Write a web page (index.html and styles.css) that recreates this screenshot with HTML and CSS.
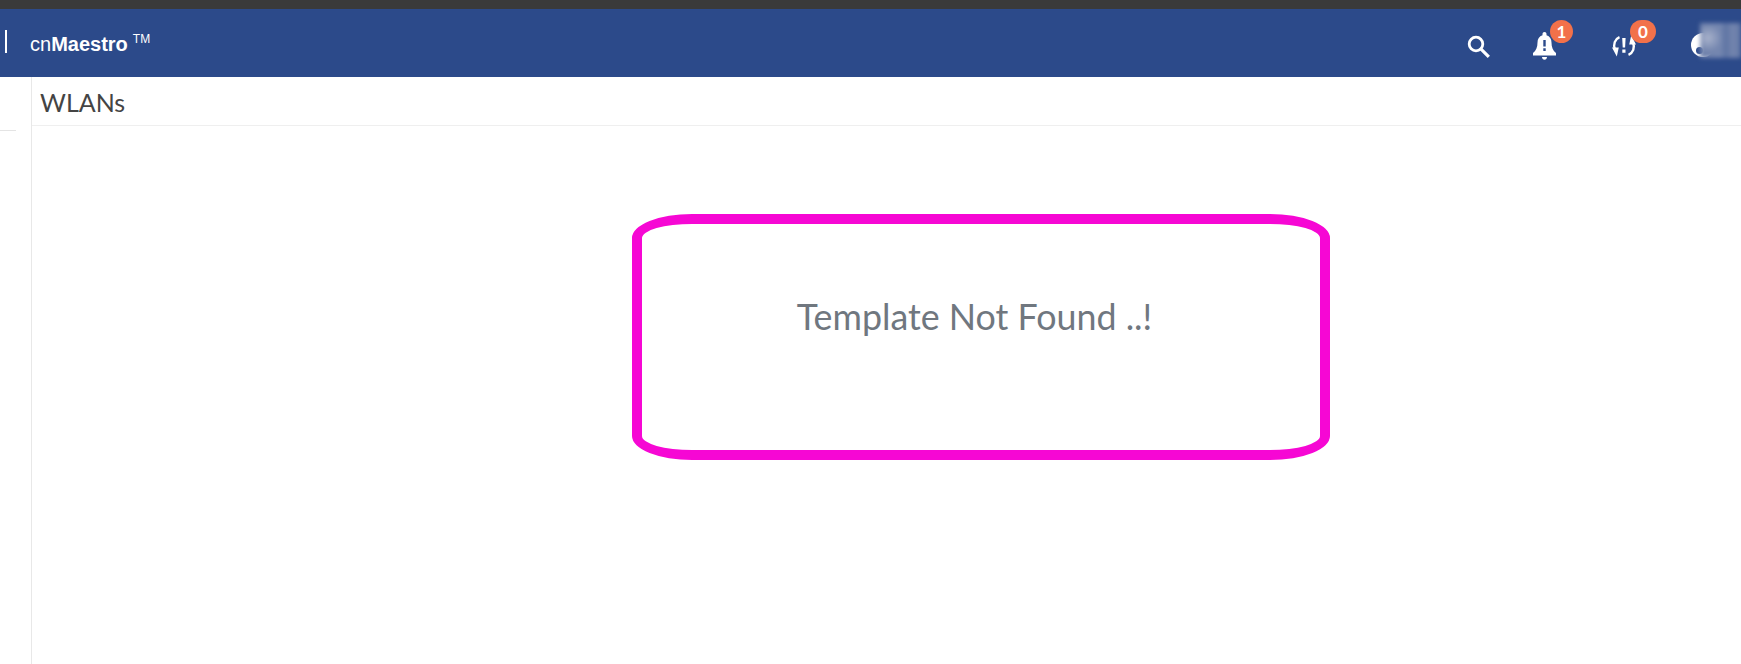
FILE: index.html
```html
<!DOCTYPE html>
<html lang="en">
<head>
  <meta charset="UTF-8">
  <title>WLANs</title>
  <link rel="stylesheet" href="styles.css">
</head>
<body>
  <div class="chrome"></div>
  <header class="topbar">
    <span class="divider"></span>
    <div class="brand">cn<b>Maestro</b><sup>TM</sup></div>
    <div class="actions">
      <svg class="icon-search" width="23" height="23" viewBox="0 0 23 23" fill="none" stroke="#fff">
        <circle cx="9" cy="9" r="6.800" stroke-width="2.800"/>
        <path d="M13.800 13.800l8 8" stroke-width="3.200"/>
      </svg>
      <div class="action action-bell">
        <svg width="23" height="28" viewBox="0 0 23 28" fill="#fff">
          <path d="M11.500 0c1.200 0 2 .9 2 2v1.300c3.300 1 5 3.700 5 7.300 0 4.900 1.300 7.900 4.500 10.400v2.600H0V21c3.200-2.500 4.500-5.500 4.500-10.400 0-3.600 1.700-6.300 5-7.300V2c0-1.100.8-2 2-2z"/>
          <path d="M9 25h5c0 1.500-1.100 2.800-2.500 2.800S9 26.500 9 25z"/>
          <path d="M10.300 8h2.400v6.500h-2.400zM10.300 16.300h2.400v2.700h-2.400z" fill="#2c4a8a"/>
        </svg>
        <span class="badge badge-one">1</span>
      </div>
      <div class="action action-sync">
        <svg width="24" height="22" viewBox="0 0 24 22" fill="none" stroke="#fff" stroke-width="2.400">
          <path d="M7.500 2.200C3 4 .8 9.500 3 14.500"/>
          <path d="M16.500 19.800C21 18 23.200 12.500 21 7.500"/>
          <path d="M0 12.500l6.800 0-2 9z" fill="#fff" stroke="none"/>
          <path d="M24 9.500l-6.800 0 2-9z" fill="#fff" stroke="none"/>
          <path d="M10.200 3h3.400l-.5 9.500h-2.400zM10.300 14.500h3.200v3.300h-3.200z" fill="#fff" stroke="none"/>
        </svg>
        <span class="badge badge-zero">0</span>
      </div>
      <span class="avatar"><span class="avatar-notch"></span></span>
    </div>
    <div class="blur-patch"></div>
  </header>
  <main class="layout">
    <aside class="sidebar"><div class="side-rule"></div></aside>
    <section class="content">
      <h1 class="page-title">WLANs</h1>
      <div class="panel">
        <div class="notice">Template Not Found ..!</div>
      </div>
    </section>
  </main>
</body>
</html>
```
FILE: styles.css
```css
html, body {
  margin: 0;
  padding: 0;
  height: 100%;
  overflow: hidden;
  background: #fff;
  font-family: 'Lato', Arial, sans-serif;
}
.chrome {
  height: 9px;
  background: #3a3a3a;
}
.topbar {
  position: relative;
  display: flex;
  align-items: center;
  height: 68px;
  background: #2c4a8a;
  color: #fff;
  overflow: hidden;
}
.divider {
  width: 2px;
  height: 23px;
  margin-left: 5px;
  margin-top: -3px;
  background: #fff;
}
.brand {
  margin-left: 23px;
  margin-top: 2px;
  font-family: 'Liberation Sans', Arial, sans-serif;
  font-size: 20px;
  font-weight: 300;
}
.brand b {
  font-weight: 700;
}
.brand sup {
  margin-left: 5px;
  font-size: 12px;
  line-height: 0;
}
.actions {
  display: flex;
  align-items: center;
  margin-left: auto;
  padding-top: 6px;
}
.icon-search {
  display: block;
  margin-right: 43px;
}
.action {
  position: relative;
  display: flex;
}
.action-bell {
  margin-right: 56px;
}
.action-sync {
  margin-right: 55px;
}
.badge {
  position: absolute;
  height: 23px;
  border-radius: 12px;
  background: #f2714a;
  color: #fff;
  font-size: 17px;
  font-weight: 700;
  line-height: 23px;
  text-align: center;
}
.badge-one {
  top: -12px;
  left: 17px;
  width: 23px;
}
.badge-zero {
  top: -15px;
  left: 18px;
  width: 26px;
}
.avatar {
  position: relative;
  display: block;
  width: 24px;
  height: 24px;
  margin-top: -3px;
  margin-right: 26px;
  border-radius: 50%;
  background: #fff;
}
.avatar-notch {
  position: absolute;
  left: 5px;
  top: 14px;
  width: 7px;
  height: 7px;
  border-radius: 50%;
  background: #2c4a8a;
}
.blur-patch {
  position: absolute;
  right: 0;
  top: 14px;
  width: 41px;
  height: 35px;
  background:
    radial-gradient(circle at 8px 15px, #a9b3cc 0, rgba(169, 179, 204, 0) 14px),
    linear-gradient(90deg, #6f81ab, #7587b0 50%, #5e74a3 62%, #7485ae 80%, #6378a6);
  filter: blur(2px);
}
.layout {
  display: flex;
  height: calc(100vh - 77px);
}
.sidebar {
  flex: none;
  box-sizing: border-box;
  width: 32px;
  border-right: 1px solid #e8e8e8;
}
.side-rule {
  width: 16px;
  margin-top: 53px;
  border-top: 1px solid #e4e4e4;
}
.content {
  flex: 1;
}
.page-title {
  margin: 0;
  height: 48px;
  padding-left: 8px;
  border-bottom: 1px solid #efefef;
  color: #444;
  font-size: 25px;
  font-weight: 400;
  line-height: 50px;
}
.panel {
  display: flex;
  padding: 88px 0 0 600px;
}
.notice {
  display: flex;
  align-items: center;
  justify-content: center;
  box-sizing: border-box;
  width: 698px;
  height: 246px;
  padding: 0 13px 42px 0;
  border: 10px solid #f607d4;
  border-radius: 60px / 24px;
  color: #70777f;
  font-size: 35.800px;
  font-weight: 400;
}
```
